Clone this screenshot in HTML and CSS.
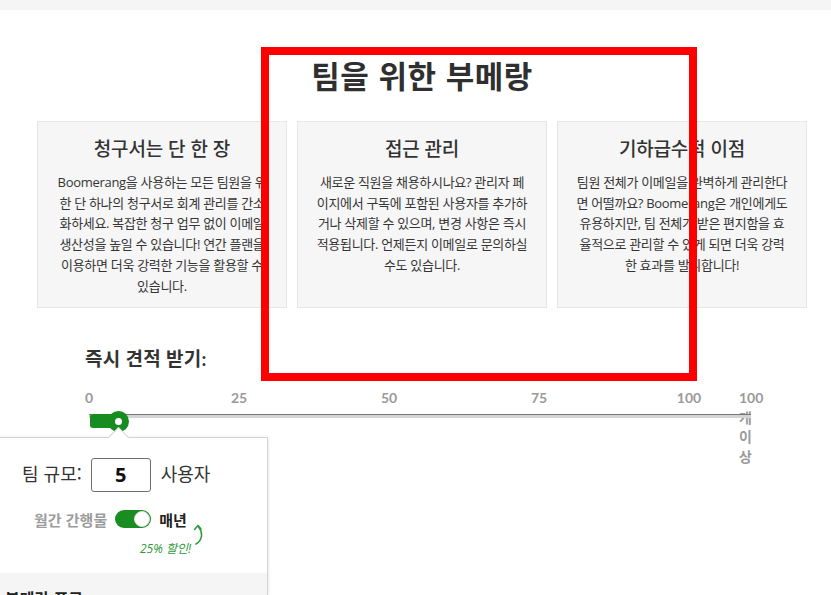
FILE: index.html
```html
<!DOCTYPE html>
<html lang="ko">
<head>
<meta charset="utf-8">
<title>팀을 위한 부메랑</title>
<link rel="stylesheet" href="styles.css">
</head>
<body>
<div class="topbar"></div>

<section class="features">
  <h1 class="features-title">팀을 위한 부메랑</h1>
  <div class="cards">
    <div class="card">
      <h2 class="card-title">청구서는 단 한 장</h2>
      <p class="card-text">Boomerang을 사용하는 모든 팀원을 위<br>한 단 하나의 청구서로 회계 관리를 간소<br>화하세요. 복잡한 청구 업무 없이 이메일<br>생산성을 높일 수 있습니다! 연간 플랜을<br>이용하면 더욱 강력한 기능을 활용할 수<br>있습니다.</p>
    </div>
    <div class="card">
      <h2 class="card-title">접근 관리</h2>
      <p class="card-text">새로운 직원을 채용하시나요? 관리자 페<br>이지에서 구독에 포함된 사용자를 추가하<br>거나 삭제할 수 있으며, 변경 사항은 즉시<br>적용됩니다. 언제든지 이메일로 문의하실<br>수도 있습니다.</p>
    </div>
    <div class="card">
      <h2 class="card-title">기하급수적 이점</h2>
      <p class="card-text">팀원 전체가 이메일을 완벽하게 관리한다<br>면 어떨까요? Boomerang은 개인에게도<br>유용하지만, 팀 전체가 받은 편지함을 효<br>율적으로 관리할 수 있게 되면 더욱 강력<br>한 효과를 발휘합니다!</p>
    </div>
  </div>
</section>

<section class="quote">
  <h3 class="quote-title">즉시 견적 받기:</h3>
  <div class="ticks">
    <span class="tick">0</span>
    <span class="tick">25</span>
    <span class="tick">50</span>
    <span class="tick">75</span>
    <span class="tick">100</span>
    <span class="tick-more">100 개 이상</span>
  </div>
  <div class="slider">
    <div class="track"></div>
    <div class="fill"></div>
    <div class="thumb"></div>
  </div>

  <div class="popover">
    <div class="size-row">
      <span class="size-label">팀 규모:</span>
      <div class="size-input">5</div>
      <span class="size-label">사용자</span>
    </div>
    <div class="billing-row">
      <span class="billing-off">월간 간행물</span>
      <span class="toggle"><span class="knob"></span></span>
      <span class="billing-on">매년</span>
    </div>
    <div class="discount">25% 할인!</div>
    <svg class="discount-arrow" width="14" height="22" viewBox="0 0 14 22">
      <path d="M4 21 C 11 17, 11 9, 6 3" fill="none" stroke="#2e9b3b" stroke-width="1.6" stroke-linecap="round"/>
      <path d="M2.5 6.5 L6 2.5 L9 6" fill="none" stroke="#2e9b3b" stroke-width="1.6" stroke-linecap="round" stroke-linejoin="round"/>
    </svg>
    <div class="plan-section">
      <div class="plan-title">부메랑 프로</div>
    </div>
  </div>
</section>

<div class="annotation"></div>
</body>
</html>
```

FILE: styles.css
```css
html, body {
  margin: 0;
  padding: 0;
  height: 595px;
  overflow: hidden;
  background: #ffffff;
}

body {
  position: relative;
  font-family: "Open Sans", "Noto Sans CJK KR", sans-serif;
  color: #333333;
}

.topbar {
  height: 10px;
  background: #f5f5f5;
}

.features {
  margin-left: 37px;
  width: 770px;
}

.features-title {
  margin: 45px 0 0;
  font-family: "Noto Sans CJK KR", sans-serif;
  font-size: 31px;
  line-height: 40px;
  font-weight: 700;
  text-align: center;
  color: #2f2f2f;
  letter-spacing: 0.5px;
}

.cards {
  margin-top: 26px;
  display: grid;
  grid-template-columns: repeat(3, 250px);
  gap: 10px;
}

.card {
  box-sizing: border-box;
  height: 187px;
  background: #f6f6f6;
  border: 1px solid #e6e6e6;
  padding: 13px 4px 0;
  text-align: center;
}

.card-title {
  margin: 0;
  font-family: "Noto Sans CJK KR", sans-serif;
  font-size: 19px;
  line-height: 26px;
  font-weight: 500;
  letter-spacing: -0.2px;
  color: #333333;
}

.card-text {
  margin: 11px 0 0;
  font-size: 13px;
  line-height: 20.7px;
  letter-spacing: -0.3px;
  color: #353535;
}

.quote {
  position: relative;
  padding-top: 39px;
}

.quote-title {
  margin: 0 0 0 85px;
  font-family: "Lato", "Noto Sans CJK KR", sans-serif;
  font-size: 19px;
  line-height: 24px;
  font-weight: 700;
  letter-spacing: 0.3px;
  color: #333333;
}

.ticks {
  margin-top: 17px;
  height: 20px;
  display: flex;
  padding-left: 74px;
  font-family: "Lato", "Noto Sans CJK KR", sans-serif;
  font-size: 14px;
  line-height: 19.5px;
  font-weight: 700;
  color: #9a9a9a;
}

.tick {
  width: 30px;
  margin-right: 120px;
  text-align: center;
}

.tick:nth-child(5) {
  margin-right: 35px;
}

.tick-more {
  width: 20px;
}

.slider {
  position: relative;
  margin: 1px 0 0 89px;
  width: 662px;
  height: 16px;
}

.track {
  margin-top: 6px;
  height: 3px;
  border-top: 1px solid #777777;
  background: #d4d4d4;
}

.fill {
  position: absolute;
  left: 1px;
  top: 0;
  width: 28px;
  height: 14px;
  border-radius: 3px 0 0 3px;
  background: #178c20;
}

.thumb {
  position: absolute;
  left: 19px;
  top: -3px;
  width: 21px;
  height: 21px;
  border-radius: 50%;
  background: #178c20;
}

.thumb::after {
  content: "";
  position: absolute;
  left: 7px;
  top: 7px;
  width: 7px;
  height: 7px;
  border-radius: 50%;
  background: #ffffff;
}

.popover {
  position: absolute;
  left: -30px;
  top: 129px;
  width: 298px;
  height: 158px;
  overflow: hidden;
  box-sizing: border-box;
  background: #ffffff;
  border: 1px solid #d3d3d3;
  border-bottom: 0;
  box-shadow: 0 1px 4px rgba(0, 0, 0, 0.12);
  font-family: "Noto Sans CJK KR", sans-serif;
}

.quote::after {
  content: "";
  position: absolute;
  left: 111px;
  top: 122px;
  width: 14px;
  height: 14px;
  background: #ffffff;
  border-top: 1px solid #d3d3d3;
  border-left: 1px solid #d3d3d3;
  transform: rotate(45deg);
}

.size-row {
  position: relative;
  display: flex;
  align-items: center;
  padding: 20px 0 0 51px;
}

.size-label {
  font-size: 18px;
  line-height: 34px;
  color: #333333;
  position: relative;
  top: -2px;
}

.size-input {
  box-sizing: border-box;
  width: 60px;
  height: 34px;
  margin: 0 10px 0 9px;
  border: 1px solid #6e6e6e;
  border-radius: 3px;
  text-align: center;
  font-family: "Open Sans", sans-serif;
  font-size: 20px;
  font-weight: 700;
  line-height: 32px;
  color: #111111;
}

.billing-row {
  display: flex;
  align-items: center;
  margin-top: 18px;
  padding-left: 63px;
  height: 18px;
  font-size: 15px;
  font-weight: 700;
}

.billing-off {
  color: #9c9c9c;
}

.toggle {
  position: relative;
  width: 36px;
  height: 18px;
  margin: 0 8px 0 8px;
  border-radius: 9px;
  background: #198d22;
}

.knob {
  position: absolute;
  right: 1px;
  top: 1px;
  width: 16px;
  height: 16px;
  box-sizing: border-box;
  border-radius: 50%;
  background: #ffffff;
  border: 1px solid #e0e0e0;
}

.billing-on {
  color: #222222;
}

.discount {
  margin-top: 14px;
  padding-left: 169px;
  font-family: "Open Sans", "Noto Sans CJK KR", sans-serif;
  font-size: 12px;
  line-height: 14px;
  font-style: italic;
  color: #2e9b3b;
}

.discount-arrow {
  position: absolute;
  left: 221px;
  top: 85px;
}

.plan-section {
  margin-top: 17px;
  height: 60px;
  background: #f5f5f5;
  padding: 14px 0 0 34px;
}

.plan-title {
  font-size: 16px;
  line-height: 22px;
  font-weight: 700;
  color: #222222;
}

.annotation {
  position: absolute;
  left: 261px;
  top: 47px;
  width: 436px;
  height: 334px;
  box-sizing: border-box;
  border: 8px solid #ff0000;
  pointer-events: none;
}
```
